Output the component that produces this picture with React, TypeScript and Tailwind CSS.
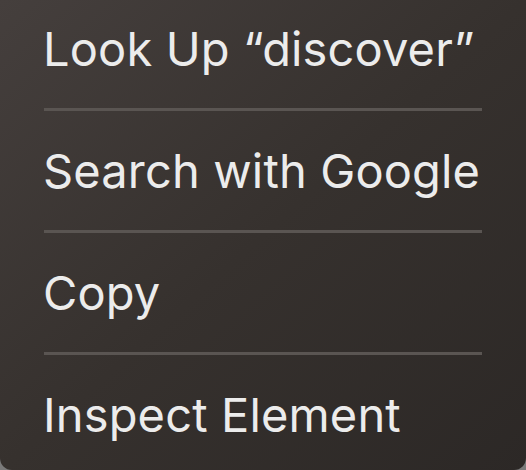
import React from "react";

const items = ["Look Up \u201Cdiscover\u201D", "Search with Google", "Copy", "Inspect Element"];

export default function App() {
  return (
    <div className="w-[526px] h-[470px] overflow-hidden bg-[#7a7a7a]">
      <div
        className="w-[526px] h-[470px] rounded-b-[12px] overflow-hidden bg-gradient-to-br from-[#453f3d] via-[#36312e] to-[#2c2826]"
        style={{ fontFamily: "Inter, 'Noto Sans', sans-serif" }}
      >
        <div className="flex flex-col -mt-[11px]">
          {items.map((t, i) => (
            <React.Fragment key={t}>
              {i > 0 && <div className="mx-[44px] h-[3px] bg-[#5a5552]" />}
              <div className="h-[119px] flex items-center pl-[43px] text-[47px] leading-none text-[#ececec] tracking-[0.15px]">
                {t}
              </div>
            </React.Fragment>
          ))}
        </div>
      </div>
    </div>
  );
}
